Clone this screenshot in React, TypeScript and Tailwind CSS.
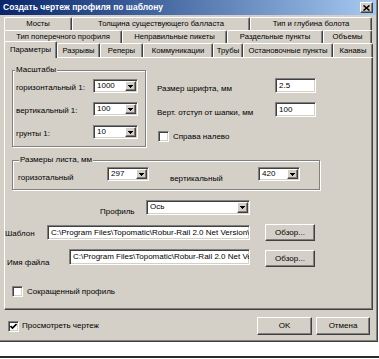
import React from "react";

const raised =
  "border border-t-white border-l-white border-r-[#404040] border-b-[#404040] shadow-[inset_-1px_-1px_0_#808080] bg-[#d4d0c8]";
const sunken =
  "border border-t-[#808080] border-l-[#808080] border-r-white border-b-white shadow-[inset_1px_1px_0_#404040,inset_-1px_-1px_0_#d4d0c8]";
const etched =
  "border border-[#808080] shadow-[1px_1px_0_white,inset_1px_1px_0_white]";

function Arrow() {
  return (
    <svg width="5" height="3" viewBox="0 0 5 3" shapeRendering="crispEdges">
      <rect x="0" y="0" width="5" height="1" fill="black" />
      <rect x="1" y="1" width="3" height="1" fill="black" />
      <rect x="2" y="2" width="1" height="1" fill="black" />
    </svg>
  );
}

function Combo({ value, className }: { value: string; className: string }) {
  return (
    <div className={`${sunken} bg-white flex items-stretch p-[1px] ${className}`}>
      <div className="flex-1 pl-[2px] pt-[1px] whitespace-nowrap overflow-hidden">{value}</div>
      <div className={`${raised} w-[11px] flex items-center justify-center`}>
        <Arrow />
      </div>
    </div>
  );
}

function Field({ value, className }: { value: string; className: string }) {
  return (
    <div
      className={`${sunken} bg-white flex items-center pl-[3px] whitespace-nowrap overflow-hidden ${className}`}
    >
      {value}
    </div>
  );
}

function Check({ checked }: { checked?: boolean }) {
  return (
    <div className={`${sunken} bg-white w-[11px] h-[11px] flex items-center justify-center`}>
      {checked && (
        <svg width="7" height="7" viewBox="0 0 7 7">
          <path d="M0.5 3 L2.5 5 L6.5 1" fill="none" stroke="black" strokeWidth="1.7" />
        </svg>
      )}
    </div>
  );
}

function Button({ label, className }: { label: string; className: string }) {
  return (
    <div className={`${raised} flex items-center justify-center ${className}`}>{label}</div>
  );
}

function Tab({ label, className, active }: { label: string; className: string; active?: boolean }) {
  return (
    <div
      className={`flex items-center justify-center whitespace-nowrap text-[7.7px] border-t border-l border-t-white border-l-white border-r border-r-[#404040] shadow-[inset_-1px_0_0_#808080] rounded-tl-[2px] rounded-tr-[2px] bg-[#d4d0c8] ${
        active ? "relative z-10 -mt-[2px] h-[17px] self-start" : "h-full"
      } ${className}`}
    >
      {label}
    </div>
  );
}

export default function App() {
  return (
    <div className="w-[379px] h-[359px] bg-white font-['Liberation_Sans',Arial,sans-serif] text-[8px] leading-none text-black overflow-hidden">
      <div className="w-[378px] h-[342px] bg-[#d4d0c8] border-r border-b border-[#404040] shadow-[inset_-1px_-1px_0_#808080] flex flex-col">
        {/* Title bar */}
        <div className="h-[15px] mr-[1px] bg-linear-to-r from-[#0a246a] to-[#a6caf0] flex items-center pl-[3px] pr-[3px]">
          <span className="text-white font-bold text-[8.5px]">Создать чертеж профиля по шаблону</span>
          <div className={`ml-auto w-[13px] h-[11px] ${raised} flex items-center justify-center`}>
            <svg width="7" height="6" viewBox="0 0 7 6">
              <path d="M0.5 0.5 L6.5 5.5 M6.5 0.5 L0.5 5.5" stroke="black" strokeWidth="1.6" />
            </svg>
          </div>
        </div>

        {/* Tabs */}
        <div className="mt-[2px] ml-[4px] flex flex-col">
          <div className="flex h-[13px]">
            <Tab label="Мосты" className="w-[68px]" />
            <Tab label="Толщина существующего балласта" className="w-[178px]" />
            <Tab label="Тип и глубина болота" className="w-[122px]" />
          </div>
          <div className="flex h-[13px]">
            <Tab label="Тип поперечного профиля" className="w-[118px]" />
            <Tab label="Неправильные пикеты" className="w-[105px]" />
            <Tab label="Раздельные пункты" className="w-[96px]" />
            <Tab label="Объемы" className="w-[49px]" />
          </div>
          <div className="flex h-[14px]">
            <Tab label="Параметры" className="w-[53px]" active />
            <Tab label="Разрывы" className="w-[43px]" />
            <Tab label="Реперы" className="w-[43px]" />
            <Tab label="Коммуникации" className="w-[70px]" />
            <Tab label="Трубы" className="w-[30px]" />
            <Tab label="Остановочные пункты" className="w-[90px]" />
            <Tab label="Канавы" className="w-[40px]" />
          </div>
        </div>

        {/* Panel */}
        <div className="ml-[4px] w-[369px] h-[253px] border border-t-white border-l-white border-r-[#404040] border-b-[#404040] shadow-[inset_-1px_-1px_0_#808080] pt-[12px] flex flex-col">
          {/* Row A */}
          <div className="flex ml-[7px]">
            <div className={`relative w-[134px] h-[77px] ${etched} pt-[8px] pl-[3px] flex flex-col gap-[9px]`}>
              <span className="absolute -top-[5px] left-[2px] px-[1px] bg-[#d4d0c8]">Масштабы</span>
              <div className="flex items-start h-[14px]">
                <span className="w-[77px] mt-[5px]">горизонтальный 1:</span>
                <Combo value="1000" className="w-[45px] h-[14px]" />
              </div>
              <div className="flex items-start h-[14px]">
                <span className="w-[77px] mt-[5px]">вертикальный 1:</span>
                <Combo value="100" className="w-[45px] h-[14px]" />
              </div>
              <div className="flex items-start h-[14px]">
                <span className="w-[77px] mt-[5px]">грунты 1:</span>
                <Combo value="10" className="w-[45px] h-[14px]" />
              </div>
            </div>
            <div className="ml-[11px] flex flex-col">
              <div className="mt-[8px] flex items-start h-[15px]">
                <span className="w-[118px] mt-[7px]">Размер шрифта, мм</span>
                <Field value="2.5" className="w-[41px] h-[15px]" />
              </div>
              <div className="mt-[9px] flex items-start h-[15px]">
                <span className="w-[118px] mt-[7px]">Верт. отступ от шапки, мм</span>
                <Field value="100" className="w-[41px] h-[15px]" />
              </div>
              <div className="mt-[14px] ml-[1px] flex items-center gap-[4px]">
                <Check />
                <span>Справа налево</span>
              </div>
            </div>
          </div>

          {/* Row B */}
          <div className="mt-[13px] ml-[7px]">
            <div className={`relative w-[308px] h-[30px] ${etched} pt-[6px] pl-[5px] flex items-start`}>
              <span className="absolute -top-[5px] left-[6px] px-[1px] bg-[#d4d0c8]">Размеры листа, мм</span>
              <span className="w-[89px] mt-[7px]">горизотальный</span>
              <Combo value="297" className="w-[42px] h-[14px]" />
              <span className="ml-[21px] w-[88px] mt-[8px]">вертикальный</span>
              <Combo value="420" className="w-[42px] h-[14px]" />
            </div>
          </div>

          {/* Row C */}
          <div className="mt-[10px] ml-[95px] flex items-start">
            <span className="w-[46px] mt-[8px]">Профиль</span>
            <Combo value="Ось" className="w-[104px] h-[15px]" />
          </div>

          {/* Row D */}
          <div className="mt-[8px] flex items-start h-[17px]">
            <span className="w-[42px] mt-[6px]">Шаблон</span>
            <Field
              value={"C:\\Program Files\\Topomatic\\Robur-Rail 2.0 Net Version\\"}
              className="mt-[1px] w-[203px] h-[15px]"
            />
            <Button label="Обзор..." className="ml-[15px] w-[50px] h-[17px]" />
          </div>

          {/* Row E */}
          <div className="mt-[8px] flex items-start h-[18px]">
            <span className="ml-[2px] w-[62px] mt-[10px]">Имя файла</span>
            <Field
              value={"C:\\Program Files\\Topomatic\\Robur-Rail 2.0 Net Ve"}
              className="w-[181px] h-[16px]"
            />
            <Button label="Обзор..." className="ml-[15px] mt-[1px] w-[50px] h-[17px]" />
          </div>

          {/* Row F */}
          <div className="mt-[19px] ml-[7px] flex items-center gap-[4px]">
            <Check />
            <span>Сокращенный профиль</span>
          </div>
        </div>

        {/* Bottom */}
        <div className="mt-[7px] flex items-center h-[18px]">
          <div className="ml-[8px] flex items-center gap-[3px]">
            <Check checked />
            <span>Просмотреть чертеж</span>
          </div>
          <Button label="OK" className="ml-auto w-[55px] h-[18px]" />
          <Button label="Отмена" className="ml-[4px] mr-[7px] w-[54px] h-[18px]" />
        </div>
      </div>
      <div className="mt-[14px] h-[2px] bg-[#2a2a2a]" />
    </div>
  );
}
